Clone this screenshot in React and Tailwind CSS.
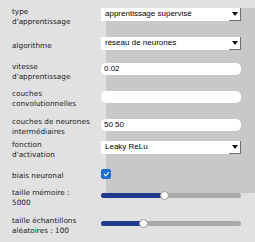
import React from 'react';

const Select = ({ value }) => (
    <div className="w-[140px] h-[13px] bg-white flex items-center">
        <span className="flex-1 pl-[4px] text-[8px] leading-none text-black whitespace-nowrap overflow-hidden">{value}</span>
        <div className="w-[12px] h-[13px] bg-white border-r border-b border-[#6f6f6f] flex items-center justify-center">
            <svg width="6" height="4" viewBox="0 0 6 4">
                <path d="M0 0 H6 L3 4 Z" fill="#111" />
            </svg>
        </div>
    </div>
);

const TextInput = ({ value }) => (
    <div className="w-[140px] h-[12px] bg-white rounded-[5px] flex items-center pl-[3px] text-[8px] leading-none text-black">
        {value}
    </div>
);

const Slider = ({ pct }) => (
    <div className="w-[140px] h-[9px] relative flex items-center">
        <div className="w-full h-[5px] rounded-full bg-[#a9a9a9] overflow-hidden">
            <div className="h-full bg-[#203a8c]" style={{ width: `${pct}%` }}></div>
        </div>
        <div
            className="absolute top-0 w-[9px] h-[9px] rounded-full bg-white border border-[#9a9a9a]"
            style={{ left: `calc(${pct}% - 4.5px)` }}
        ></div>
    </div>
);

const Row = ({ h, label, children }) => (
    <div className="flex items-center pl-[12px]" style={{ height: h }}>
        <div className="w-[89px] pt-[5px] font-['DejaVu_Sans',sans-serif] text-[7.3px] leading-[10px] text-[#222]">{label}</div>
        {children}
    </div>
);

const App = () => {
    return (
        <div className="w-[255px] h-[242px] bg-[#e1e1e1] relative overflow-hidden font-['Liberation_Sans',Arial,sans-serif]">
            {/* gray panel behind the controls column */}
            <div className="absolute left-[106px] top-[8px] w-[149px] h-[185px] bg-[#c8c8c8]"></div>

            <div className="relative flex flex-col">
                <Row h={28} label={<>type<br />d'apprentissage</>}>
                    <Select value="apprentissage supervisé" />
                </Row>
                <Row h={30} label="algorithme">
                    <Select value="réseau de neurones" />
                </Row>
                <Row h={22} label={<>vitesse<br />d'apprentissage</>}>
                    <TextInput value="0.02" />
                </Row>
                <Row h={33} label={<>couches<br />convolutionnelles</>}>
                    <TextInput value="" />
                </Row>
                <Row h={23} label={<>couches de neurones<br />intermédiaires</>}>
                    <TextInput value="50 50" />
                </Row>
                <Row h={22} label={<>fonction<br />d'activation</>}>
                    <Select value="Leaky ReLu" />
                </Row>
                <Row h={31} label="biais neuronal">
                    <div className="w-[10px] h-[10px] rounded-[2px] bg-[#1a6fd6] flex items-center justify-center">
                        <svg width="7" height="6" viewBox="0 0 7 6">
                            <path d="M1 3 L2.8 4.8 L6 1" fill="none" stroke="white" strokeWidth="1.1" />
                        </svg>
                    </div>
                </Row>
                <Row h={13} label={<>taille mémoire :<br />5000</>}>
                    <Slider pct={45.7} />
                </Row>
                <Row h={43} label={<>taille échantillons<br />aléatoires : 100</>}>
                    <Slider pct={30} />
                </Row>
            </div>
        </div>
    );
};

export default App;
